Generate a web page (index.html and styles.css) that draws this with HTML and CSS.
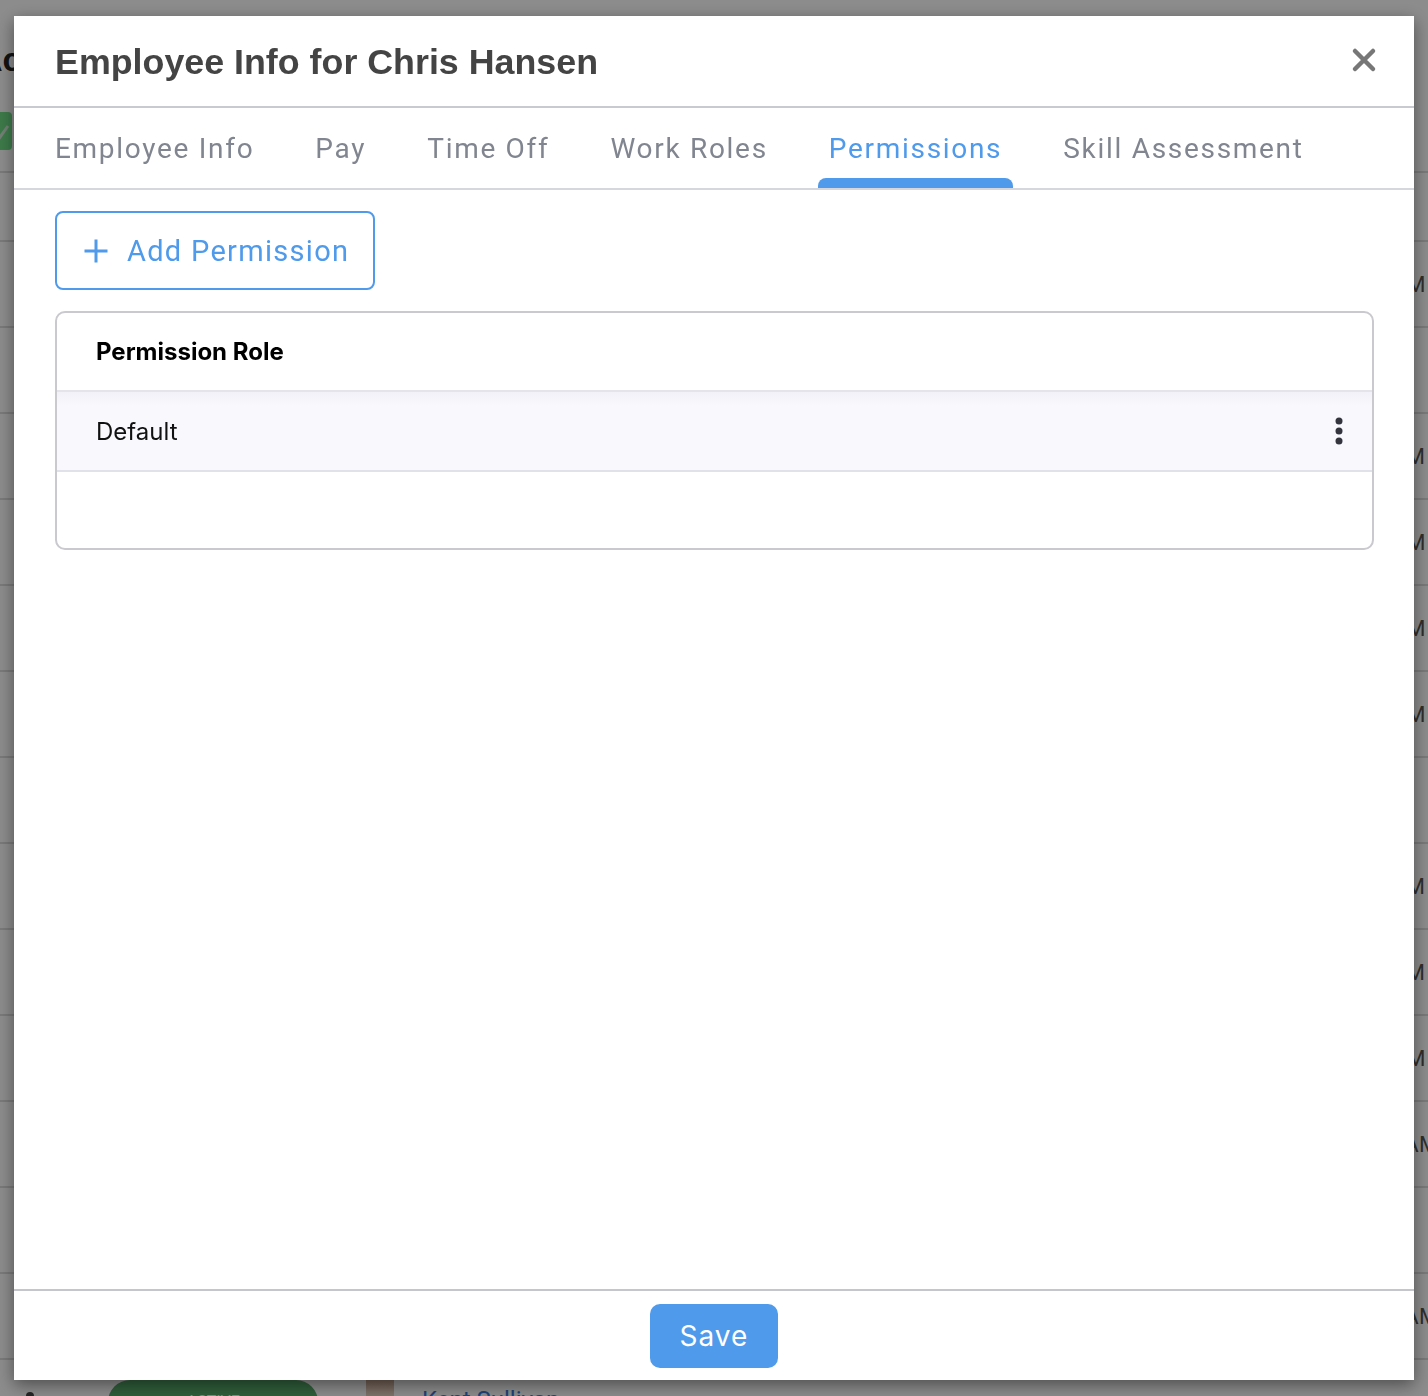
FILE: index.html
```html
<!DOCTYPE html>
<html lang="en">
<head>
    <meta charset="UTF-8">
    <meta name="viewport" content="width=device-width, initial-scale=1.0">
    <title>Employee Info</title>
    <link rel="stylesheet" href="styles.css">
</head>
<body>
    <div class="page">
        <h1 class="page-title">Activity Log</h1>
        <div class="toolbar">
            <span class="approve-btn">
                <svg width="60" height="38" viewBox="0 0 60 38">
                    <path d="M40 22 L46 28 L56 14" stroke="#cfe8d4" stroke-width="3" fill="none"/>
                </svg>
            </span>
        </div>
        <div class="row head-row"></div>
        <div class="row"><span></span><span></span><span></span><span class="date">Mar 12, 2019 9:02 AM</span></div>
        <div class="row"><span></span><span></span><span></span><span class="date">Mar 12, 2019 8:1 AM</span></div>
        <div class="row"><span></span><span></span><span></span><span class="date">Mar 11, 2019 4:15 PM</span></div>
        <div class="row"><span></span><span></span><span></span><span class="date">Mar 11, 2019 10:4 AM</span></div>
        <div class="row"><span></span><span></span><span></span><span class="date">Mar 11, 2019 9:02 AM</span></div>
        <div class="row"><span></span><span></span><span></span><span class="date">Mar 11, 2019 8:22 AM</span></div>
        <div class="row"><span></span><span></span><span></span><span class="date">Mar 10, 2019 7:1 AM</span></div>
        <div class="row"><span></span><span></span><span></span><span class="date">Mar 10, 2019 4:45 PM</span></div>
        <div class="row"><span></span><span></span><span></span><span class="date">Mar 10, 2019 3:35 PM</span></div>
        <div class="row"><span></span><span></span><span></span><span class="date">Mar 10, 2019 11:1 AM</span></div>
        <div class="row"><span></span><span></span><span></span><span class="date">Mar 10, 2019 11:22 AM</span></div>
        <div class="row"><span></span><span></span><span></span><span class="date">Mar 10, 2019 9:1 AM</span></div>
        <div class="row"><span></span><span></span><span></span><span class="date">Mar 10, 2019 11:45 AM</span></div>
        <div class="row last-row">
            <span class="bullet"></span>
            <span class="status-pill">ACTIVE</span>
            <span class="person"><span class="avatar"></span><span class="link">Kent Sullivan</span></span>
            <span class="date">Mar 10, 2019 11:43 AM</span>
        </div>
    </div>
    <div class="overlay"></div>

    <div class="modal">
        <div class="modal-header">
            <h2 class="modal-title">Employee Info for Chris Hansen</h2>
            <button class="close-button" aria-label="Close">
                <svg width="26" height="26" viewBox="0 0 26 26">
                    <path d="M4 4 L22 22 M22 4 L4 22" stroke="#777" stroke-width="4.5" stroke-linecap="round" fill="none"/>
                </svg>
            </button>
        </div>
        <div class="tabs">
            <div class="tab">Employee Info</div>
            <div class="tab">Pay</div>
            <div class="tab">Time Off</div>
            <div class="tab">Work Roles</div>
            <div class="tab active">Permissions</div>
            <div class="tab">Skill Assessment</div>
        </div>
        <div class="modal-body">
            <button class="add-button">
                <svg width="26" height="26" viewBox="0 0 26 26">
                    <path d="M13 1.5 V24.5 M1.5 13 H24.5" stroke="#4f9aea" stroke-width="3" fill="none"/>
                </svg>
                Add Permission
            </button>
            <div class="perm-table">
                <div class="perm-head">Permission Role</div>
                <div class="perm-row">
                    <span>Default</span>
                    <svg class="kebab" width="10" height="30" viewBox="0 0 10 30">
                        <circle cx="5" cy="5" r="3.5" fill="#34343f"/>
                        <circle cx="5" cy="15" r="3.5" fill="#34343f"/>
                        <circle cx="5" cy="25" r="3.5" fill="#34343f"/>
                    </svg>
                </div>
                <div class="perm-empty"></div>
            </div>
        </div>
        <div class="modal-footer">
            <button class="save-button">Save</button>
        </div>
    </div>
</body>
</html>
```

FILE: styles.css
```css
body {
    margin: 0;
    font-family: 'Roboto', sans-serif;
    background: #fff;
    overflow: hidden;
    height: 1396px;
}
.page {
    width: 1480px;
    margin-left: -22px;
}
.page-title {
    margin: 0;
    height: 100px;
    padding-top: 40px;
    box-sizing: border-box;
    font-family: 'Liberation Sans', sans-serif;
    font-size: 34px;
    color: #222;
}
.toolbar {
    height: 73px;
    padding-top: 12px;
    box-sizing: border-box;
    border-bottom: 2px solid #ddd;
}
.approve-btn {
    display: inline-flex;
    background: #70de86;
    height: 38px;
    width: 60px;
    border-radius: 4px;
    margin-left: -26px;
}
.row {
    height: 86px;
    border-top: 2px solid #ddd;
    box-sizing: border-box;
    display: grid;
    grid-template-columns: 130px 258px 835px auto;
    align-items: center;
}
.head-row {
    height: 67px;
    border-top: none;
}
.last-row {
    align-items: start;
    padding-top: 20px;
}
.date {
    font-size: 22px;
    color: #555;
    white-space: nowrap;
    letter-spacing: 0.5px;
}
.last-row .date {
    padding-top: 14px;
}
.bullet {
    width: 8px;
    height: 8px;
    border-radius: 50%;
    background: #444;
    margin: 12px 0 0 48px;
}
.status-pill {
    width: 210px;
    height: 44px;
    border-radius: 22px;
    background: #56ab6a;
    color: #fff;
    text-align: center;
    line-height: 44px;
}
.person {
    display: flex;
    align-items: flex-start;
    gap: 28px;
}
.avatar {
    width: 28px;
    height: 40px;
    background: linear-gradient(#c9a995, #e7d3c4 40%, #fff 70%, #c9c9c9);
}
.link {
    color: #3b7ad9;
    font-size: 24px;
    padding-top: 6px;
}
.overlay {
    position: fixed;
    inset: 0;
    background: rgba(0, 0, 0, 0.45);
}
.modal {
    position: fixed;
    left: 14px;
    top: 16px;
    width: 1400px;
    height: 1364px;
    background: #fff;
    display: flex;
    flex-direction: column;
    box-shadow: 0 5px 16px rgba(0, 0, 0, 0.45);
}
.modal-header {
    height: 90px;
    border-bottom: 2px solid #c9c9d1;
    display: flex;
    align-items: center;
    justify-content: space-between;
    padding: 0 37px 0 41px;
    flex-shrink: 0;
}
.modal-title {
    margin: 0;
    font-family: 'Liberation Sans', sans-serif;
    font-size: 35.8px;
    font-weight: bold;
    color: #444;
    padding-top: 2px;
}
.close-button {
    background: none;
    border: none;
    padding: 0;
    cursor: pointer;
    display: flex;
    margin-top: -2px;
}
.tabs {
    height: 80px;
    border-bottom: 2px solid #d6d6de;
    display: flex;
    gap: 39px;
    padding-left: 30px;
    flex-shrink: 0;
}
.tab {
    position: relative;
    padding: 0 11px;
    display: flex;
    align-items: center;
    font-size: 28px;
    letter-spacing: 1.7px;
    color: #80858f;
    cursor: pointer;
}
.tab.active {
    color: #4f9aea;
}
.tab.active::after {
    content: '';
    position: absolute;
    left: 0;
    right: 0;
    bottom: 0;
    height: 10px;
    background: #4f9aea;
    border-radius: 8px 8px 0 0;
}
.modal-body {
    flex: 1;
    padding: 21px 40px 0 41px;
    display: flex;
    flex-direction: column;
    align-items: flex-start;
    gap: 21px;
}
.add-button {
    height: 79px;
    width: 320px;
    border: 2px solid #4f9aea;
    border-radius: 8px;
    background: #fff;
    color: #4f9aea;
    font-family: 'Roboto', sans-serif;
    font-size: 29px;
    letter-spacing: 1.3px;
    display: flex;
    align-items: center;
    gap: 18px;
    padding: 0 0 0 26px;
    cursor: pointer;
}
.perm-table {
    align-self: stretch;
    border: 2px solid #c9c9ce;
    border-radius: 10px;
    overflow: hidden;
    font-family: 'Inter', sans-serif;
    font-size: 24px;
    color: #111;
}
.perm-head {
    height: 77px;
    display: flex;
    align-items: center;
    padding-left: 39px;
    font-weight: 700;
    color: #000;
    border-bottom: 2px solid #e4e4ea;
}
.perm-row {
    height: 78px;
    display: flex;
    align-items: center;
    justify-content: space-between;
    padding: 0 28px 0 39px;
    background: linear-gradient(#f1f1f7, #f8f8fd 14px);
    border-bottom: 2px solid #e1e1e9;
}
.perm-empty {
    height: 76px;
}
.modal-footer {
    height: 89px;
    border-top: 2px solid #c5c5cd;
    display: flex;
    justify-content: center;
    align-items: center;
    flex-shrink: 0;
}
.save-button {
    width: 128px;
    height: 64px;
    border: none;
    border-radius: 10px;
    background: #4f9aea;
    color: #fff;
    font-family: 'Inter', sans-serif;
    font-size: 28px;
    letter-spacing: 1px;
    cursor: pointer;
}
```
